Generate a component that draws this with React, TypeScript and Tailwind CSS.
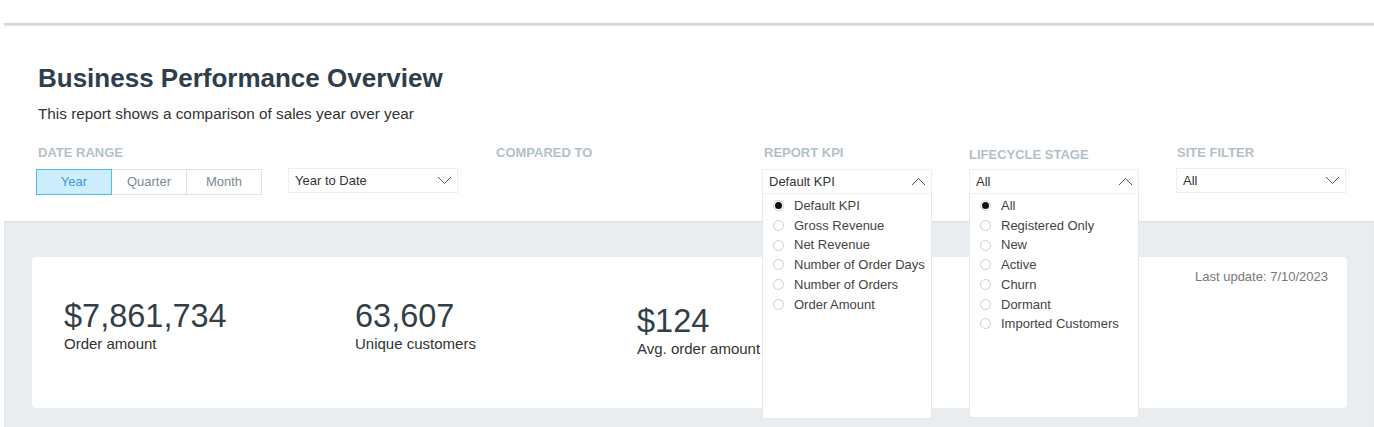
import { useState } from 'react'

const kpiOptions = ['Default KPI', 'Gross Revenue', 'Net Revenue', 'Number of Order Days', 'Number of Orders', 'Order Amount']
const stageOptions = ['All', 'Registered Only', 'New', 'Active', 'Churn', 'Dormant', 'Imported Customers']

function Chevron({ up = false }: { up?: boolean }) {
    return (
        <svg width="15" height="9" viewBox="0 0 15 9" fill="none" className="shrink-0">
            <path d={up ? 'M1 8 L7.5 1.5 L14 8' : 'M1 1 L7.5 7.5 L14 1'} stroke="#555" strokeWidth="1" />
        </svg>
    )
}

function Radio({ checked }: { checked: boolean }) {
    return (
        <span className="w-[11px] h-[11px] rounded-full border border-[#cfcfcf] bg-white flex items-center justify-center shrink-0">
            {checked && <span className="w-[7px] h-[7px] rounded-full bg-[#111]" />}
        </span>
    )
}

function Select({ value, open = false, options = [], listHeight = 225 }: { value: string; open?: boolean; options?: string[]; listHeight?: number }) {
    return (
        <div className="relative w-[170px]">
            <div className="h-[25px] bg-white border border-[#eceff1] flex items-center justify-between pl-[6px] pr-[5px] text-[13px] text-[#333]">
                <span>{value}</span>
                <Chevron up={open} />
            </div>
            {open && (
                <div
                    className="absolute left-0 top-[25px] w-[170px] bg-white border border-[#e8e8e8] border-t-0 pt-[2px] z-20"
                    style={{ height: listHeight }}
                >
                    {options.map((opt, i) => (
                        <div key={opt} className="flex items-center gap-[10px] pl-[10px] h-[19.7px] text-[13px] text-[#444]">
                            <Radio checked={i === 0} />
                            <span className="whitespace-nowrap">{opt}</span>
                        </div>
                    ))}
                </div>
            )}
        </div>
    )
}

function Label({ children, className = '' }: { children: React.ReactNode; className?: string }) {
    return <p className={`text-[13px] leading-[16px] font-bold uppercase text-[#b5bfc7] ${className}`}>{children}</p>
}

export default function App() {
    const [range, setRange] = useState('Year')

    return (
        <div className="min-h-screen bg-white pl-[4px] font-['Liberation_Sans',Arial,sans-serif] overflow-hidden">
            {/* ── Top rule ── */}
            <div className="h-[23px]" />
            <div className="h-[2px] bg-[#d4d4d4] shadow-[0_1px_2px_rgba(0,0,0,0.12)]" />

            {/* ── Header ── */}
            <header className="pl-[32px] pt-[38px] pb-[26px]">
                <h1 className="text-[26px] leading-[30px] font-bold text-[#2f3e4a] pl-[2px]">Business Performance Overview</h1>
                <p className="mt-[11px] text-[15.3px] leading-[20px] text-[#333] pl-[2px]">This report shows a comparison of sales year over year</p>

                <div className="flex mt-[21px]">
                    <div className="w-[422px]">
                        <Label className="pl-[2px]">Date Range</Label>
                        <div className="flex mt-[8px]">
                            <div className="flex h-[26px] text-[13px]">
                                {['Year', 'Quarter', 'Month'].map((r) => (
                                    <button
                                        key={r}
                                        onClick={() => setRange(r)}
                                        className={`w-[76px] border -ml-px first:ml-0 ${
                                            range === r
                                                ? 'bg-[#cdeefd] border-[#4fb9f0] text-[#3b98d6] relative z-10'
                                                : 'bg-white border-[#dde3e7] text-[#7b8a96]'
                                        }`}
                                    >
                                        {r}
                                    </button>
                                ))}
                            </div>
                            <div className="ml-[26px] -mt-px">
                                <Select value="Year to Date" />
                            </div>
                        </div>
                    </div>

                    <div className="ml-[38px] w-[266px]">
                        <Label>Compared To</Label>
                    </div>

                    <div className="w-[170px]">
                        <Label className="pl-[2px]">Report KPI</Label>
                        <div className="mt-[8px]">
                            <Select value="Default KPI" open options={kpiOptions} listHeight={225} />
                        </div>
                    </div>

                    <div className="ml-[37px] w-[170px]">
                        <Label className="mt-[2px]">Lifecycle Stage</Label>
                        <div className="mt-[6px]">
                            <Select value="All" open options={stageOptions} listHeight={224} />
                        </div>
                    </div>

                    <div className="ml-[37px] w-[171px]">
                        <Label className="pl-[1px]">Site Filter</Label>
                        <div className="mt-[7px]">
                            <Select value="All" />
                        </div>
                    </div>
                </div>
            </header>

            {/* ── KPI Panel ── */}
            <main className="bg-[#e9edf0] shadow-[inset_0_1px_2px_rgba(0,0,0,0.06)] pl-[28px] pr-[27px] pt-[36px] pb-[20px]">
                <div className="bg-white rounded-[4px] h-[151px] flex justify-between">
                    <div className="flex pl-[32px] pt-[41px] text-[#333f48]">
                        <div className="w-[291px]">
                            <p className="text-[32.5px] leading-[36px]">$7,861,734</p>
                            <p className="text-[15px] leading-[18px] mt-px text-[#333]">Order amount</p>
                        </div>
                        <div className="w-[282px]">
                            <p className="text-[32.5px] leading-[36px]">63,607</p>
                            <p className="text-[15px] leading-[18px] mt-px text-[#333]">Unique customers</p>
                        </div>
                        <div className="pt-[5px]">
                            <p className="text-[32.5px] leading-[36px]">$124</p>
                            <p className="text-[15px] leading-[18px] mt-px text-[#333] whitespace-nowrap">Avg. order amount</p>
                        </div>
                    </div>
                    <p className="pt-[12px] pr-[19px] text-[13px] leading-[16px] text-[#777]">Last update: 7/10/2023</p>
                </div>
            </main>
        </div>
    )
}
